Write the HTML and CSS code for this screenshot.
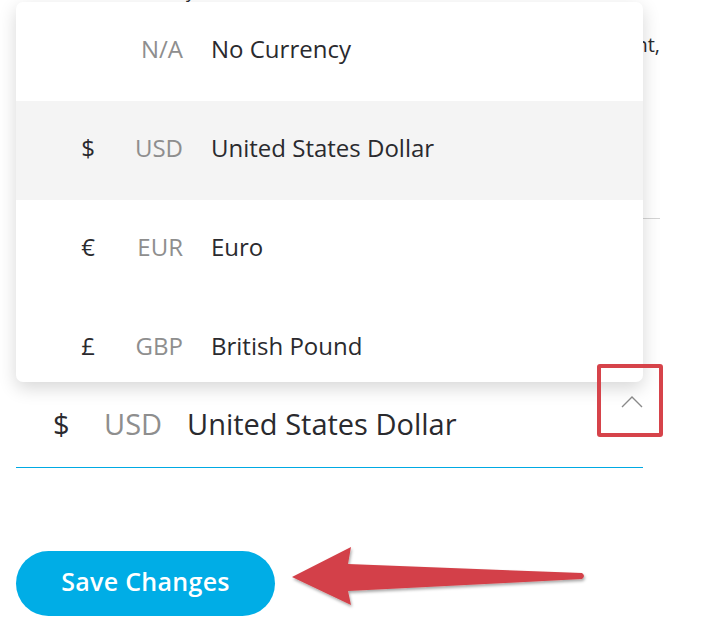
FILE: index.html
```html
<!DOCTYPE html>
<html lang="en">
<head>
<meta charset="utf-8">
<title>Currency settings</title>
<link rel="stylesheet" href="styles.css">
</head>
<body>
<main class="page">
  <section class="intro">
    <h2 class="label">Default currency</h2>
    <p class="desc">Choose the currency shown next to each price and amount,</p>
  </section>
  <hr class="divider">
  <div class="field">
    <span class="sym">$</span>
    <span class="code">USD</span>
    <span class="name">United States Dollar</span>
    <svg class="chev" width="22" height="13" viewBox="0 0 22 13"><path d="M1 12 L11 2 L21 12" fill="none" stroke="#8a8a8a" stroke-width="1.4"/></svg>
  </div>
  <div class="actions">
    <button class="save">Save Changes</button>
  </div>

  <ul class="menu">
    <li class="opt"><span class="sym"></span><span class="code">N/A</span><span class="name">No Currency</span></li>
    <li class="opt active"><span class="sym">$</span><span class="code">USD</span><span class="name">United States Dollar</span></li>
    <li class="opt"><span class="sym">€</span><span class="code">EUR</span><span class="name">Euro</span></li>
    <li class="opt"><span class="sym">£</span><span class="code">GBP</span><span class="name">British Pound</span></li>
  </ul>

  <div class="mark-box"></div>
  <svg class="mark-arrow" width="310" height="80" viewBox="0 0 310 80">
    <defs>
      <filter id="sh" x="-10%" y="-30%" width="120%" height="160%">
        <feDropShadow dx="1" dy="2" stdDeviation="1.5" flood-color="#000" flood-opacity="0.35"/>
      </filter>
    </defs>
    <path filter="url(#sh)" fill="#d34148" d="M4 38 L63 8 L60 25 L294 34 Q298 37 294 40 L60 52 L63 66 Z"/>
  </svg>
</main>
</body>
</html>
```

FILE: styles.css
```css
* { box-sizing: border-box; }
html, body { margin: 0; padding: 0; background: #fff; }
body {
  font-family: "Open Sans", Lato, sans-serif;
  color: #2a2a2e;
  width: 704px;
  height: 636px;
  overflow: hidden;
}
.page {
  position: relative;
  display: flow-root;
  padding: 0 44px 0 16px;
  height: 636px;
}
.intro { margin-top: -18px; padding-left: 40px; }
.label {
  margin: 0;
  font-size: 18px;
  font-weight: 400;
  line-height: 18px;
}
.desc {
  margin: 30px 0 0 -40px;
  font-size: 20px;
  line-height: 30px;
  text-align: right;
  white-space: nowrap;
}
.divider {
  margin: 158px 0 0;
  border: 0;
  border-top: 1px solid #d4d4d4;
  width: 644px;
}
.field {
  margin-top: 182px;
  width: 627px;
  height: 67px;
  border-bottom: 1px solid #00a9e3;
  display: grid;
  grid-template-columns: 51px 83px auto 1fr auto;
  align-items: center;
  padding: 0 0 22px 37px;
  font-size: 29px;
}
.field .sym { text-align: left; }
.field .code { color: #8e8e8e; }
.field .name { white-space: nowrap; }
.field .chev { grid-column: 5; align-self: start; margin: -6px 0 0 0; }
.actions { margin-top: 83px; }
.save {
  width: 259px;
  height: 65px;
  border: 0;
  border-radius: 33px;
  background: #00ade6;
  color: #fff;
  font-family: "Open Sans", sans-serif;
  font-size: 25px;
  font-weight: 600;
  letter-spacing: 0.3px;
  padding: 0 0 5px;
}
.menu {
  position: absolute;
  top: 2px;
  left: 16px;
  width: 627px;
  height: 380px;
  margin: 0;
  padding: 0;
  list-style: none;
  background: #fff;
  border-radius: 7px;
  overflow: hidden;
  box-shadow: 0 6px 18px rgba(0, 0, 0, 0.16);
}
.opt {
  height: 99px;
  display: grid;
  grid-template-columns: 40px 75px auto;
  align-items: center;
  padding-left: 52px;
  padding-bottom: 7px;
  font-size: 24px;
}
.opt.active { background: #f4f4f4; }
.opt .sym { text-align: center; }
.opt .code { text-align: right; color: #8e8e8e; }
.opt .name { padding-left: 28px; }
.mark-box {
  position: absolute;
  left: 597px;
  top: 364px;
  width: 66px;
  height: 73px;
  border: 4px solid #d6434a;
  border-radius: 3px;
}
.mark-arrow {
  position: absolute;
  left: 288px;
  top: 539px;
}
```
